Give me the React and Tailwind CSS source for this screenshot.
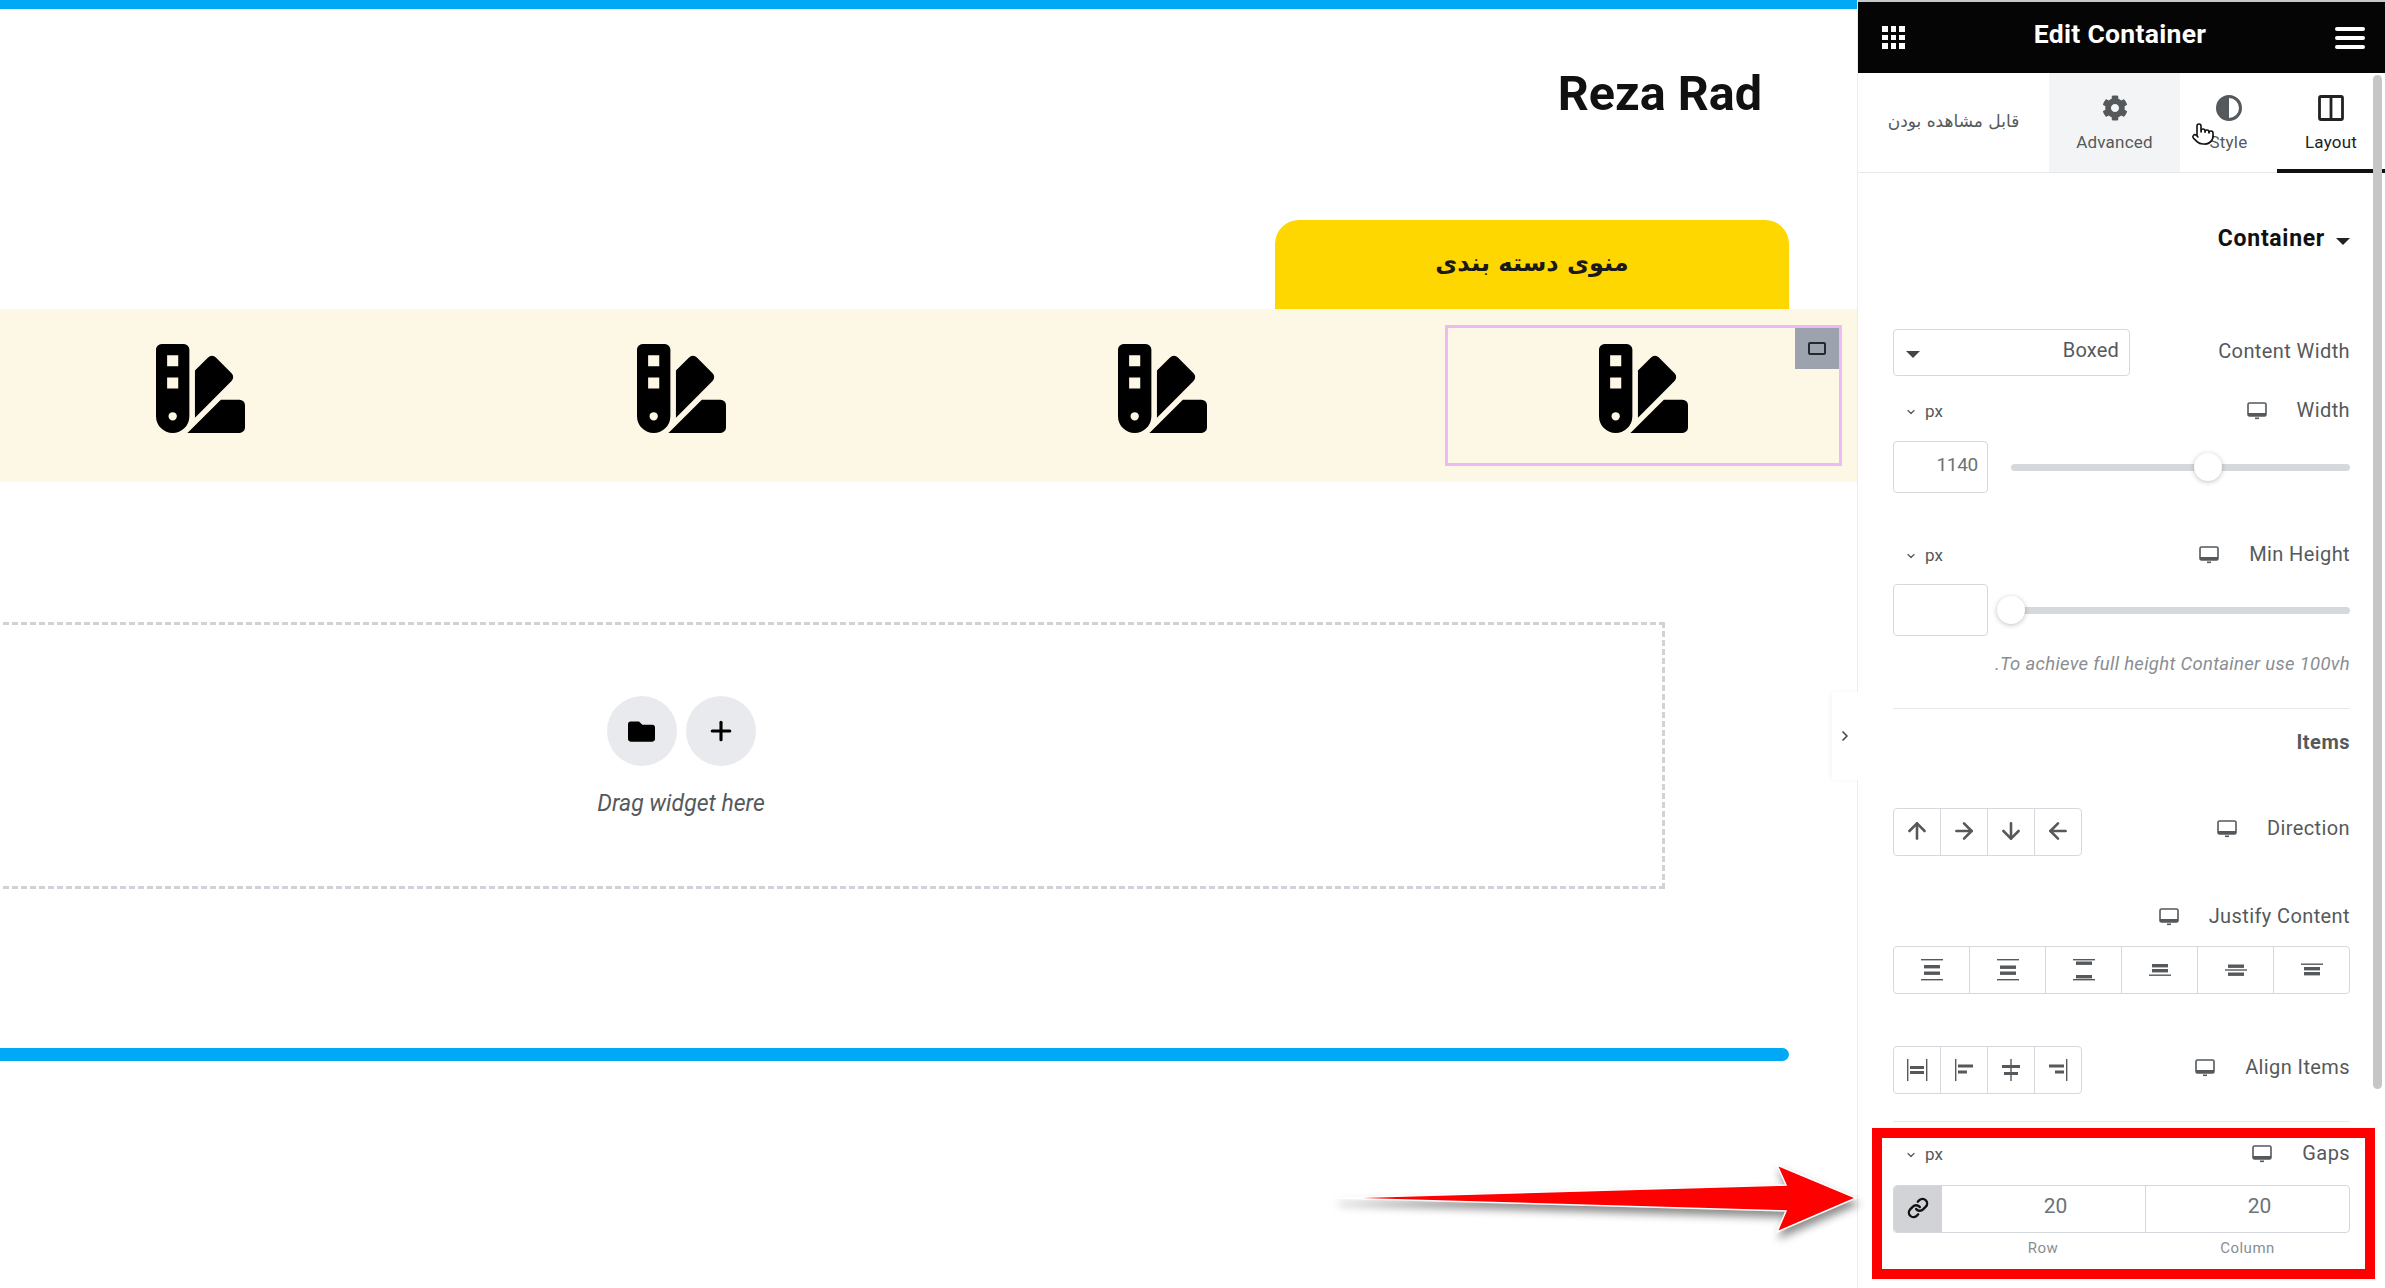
import React from 'react';
import { ArrowUp, ArrowRight, ArrowDown, ArrowLeft, ChevronDown, ChevronRight, Link, Plus, Pointer } from 'lucide-react';
import { FaSwatchbook, FaCog, FaFolder } from 'react-icons/fa';

const PANEL = "font-['Roboto',sans-serif]";

// small monitor glyph next to responsive controls
function Monitor({ className = '' }) {
  return (
    <svg viewBox="0 0 20 20" className={`w-[20px] h-[20px] text-[#55595c] ${className}`} fill="none">
      <rect x="1" y="2" width="18" height="13" rx="1.5" stroke="currentColor" strokeWidth="1.6" />
      <rect x="1" y="12" width="18" height="3" fill="currentColor" />
      <rect x="8" y="16.5" width="4" height="1.6" fill="currentColor" />
    </svg>
  );
}

function UnitPicker() {
  return (
    <div className="flex items-center gap-[8px] pl-[12px] pt-[3px] text-[17px] text-[#55595c]">
      <ChevronDown className="w-[12px] h-[12px]" strokeWidth={2.5} />
      <span>px</span>
    </div>
  );
}

function ControlHeader({ label, mt, gap = 'gap-[30px]', unit }) {
  return (
    <div className={`flex items-center justify-between h-[24px] ${mt}`}>
      {unit ? <UnitPicker /> : <span />}
      <div className={`flex items-center ${gap}`}>
        <Monitor className="mt-[2px]" />
        <span className="text-[20px] tracking-[0.4px] text-[#55595c]">{label}</span>
      </div>
    </div>
  );
}

function SliderRow({ value, thumbLeft, mt }) {
  return (
    <div className={`flex items-center gap-[23px] h-[52px] ${mt}`}>
      <div className="w-[95px] h-full border border-[#d5d8dc] rounded-[4px] flex items-center justify-end pr-[9px] pb-[3px] text-[19px] tracking-[-0.3px] text-[#6d7278]">
        {value}
      </div>
      <div className="relative flex-1 h-[7px] rounded-full bg-[#d5d8dc]">
        <div
          className="absolute top-1/2 -translate-y-1/2 -translate-x-1/2 w-[28px] h-[28px] rounded-full bg-white shadow-[0_1px_5px_rgba(0,0,0,0.25)]"
          style={{ left: thumbLeft }}
        />
      </div>
    </div>
  );
}

function ButtonGroup({ items, className = '' }) {
  return (
    <div className={`flex h-[48px] border border-[#d5d8dc] rounded-[4px] divide-x divide-[#d5d8dc] text-[#55595c] ${className}`}>
      {items.map((item, i) => (
        <div key={i} className="flex-1 flex items-center justify-center">
          {item}
        </div>
      ))}
    </div>
  );
}

// Bars + rule glyphs for justify content and align items, as [x, y, w, h].
function Bars({ rects }) {
  return (
    <svg viewBox="0 0 24 24" className="w-[24px] h-[24px]" fill="currentColor">
      {rects.map(([x, y, w, h], i) => (
        <rect key={i} x={x} y={y} width={w} height={h} />
      ))}
    </svg>
  );
}

const justifyIcons = [
  [[1, 1, 22, 1.4], [4, 7, 16, 3.4], [4, 13.5, 16, 3.4], [1, 21, 22, 1.4]],
  [[1, 1, 22, 1.4], [4, 7.5, 16, 3.4], [4, 13.5, 16, 3.4], [1, 21, 22, 1.4]],
  [[1, 1, 22, 1.4], [4, 3.5, 16, 3.4], [4, 17, 16, 3.4], [1, 21, 22, 1.4]],
  [[4, 6, 16, 3.4], [4, 11, 16, 3.4], [1, 16.5, 22, 1.4]],
  [[4, 6.5, 16, 3.4], [1, 11.3, 22, 1.4], [4, 14.5, 16, 3.4]],
  [[1, 5.5, 22, 1.4], [4, 9, 16, 3.4], [4, 14, 16, 3.4]],
];

const alignIcons = [
  [[2, 1, 1.4, 22], [21, 1, 1.4, 22], [5, 8, 14, 3], [5, 13, 14, 3]],
  [[3, 1, 1.4, 22], [6, 6.5, 15, 3], [6, 12.5, 9, 3]],
  [[11.3, 1, 1.4, 22], [3, 7, 18, 3], [5, 14, 14, 3]],
  [[20, 1, 1.4, 22], [3, 6.5, 15, 3], [9, 12.5, 9, 3]],
];

function Canvas() {
  return (
    <main className="flex-1 min-w-0 overflow-hidden font-['Roboto',sans-serif]">
      <div className="h-[9px] bg-[#00a8f5]" />
      <h1 className="mt-[57px] h-[56px] pr-[95px] text-right text-[48.5px] leading-[56px] font-bold text-[#111]">Reza Rad</h1>

      <div className="mt-[98px] flex justify-end pr-[68px]">
        <div className="w-[514px] h-[89px] rounded-t-[24px] bg-[#ffd700] flex items-center justify-center pb-[4px] font-['DejaVu_Sans',sans-serif] text-[24px] font-bold text-[#1a1a1a]" dir="rtl">
          منوی دسته بندی
        </div>
      </div>

      <div className="h-[173px] bg-[#fdf7e6] pt-[16px] pl-[2px] flex gap-[84px]">
        {[0, 1, 2, 3].map(i => (
          <div
            key={i}
            className={`relative w-[397px] h-[141px] flex items-center justify-center pb-[14px] ${i === 3 ? 'border-[3px] border-[#f0b8f5]' : ''}`}
          >
            <FaSwatchbook className="w-[89px] h-[89px] text-black" />
            {i === 3 && (
              <div className="absolute top-0 right-0 w-[44px] h-[41px] bg-[#9ca3af] flex items-center justify-center">
                <div className="w-[18px] h-[13px] rounded-[2px] border-2 border-[#25282c]" />
              </div>
            )}
          </div>
        ))}
      </div>

      <div className="mt-[140px] -ml-[303px] w-[1968px] h-[267px] border-[3px] border-dashed border-[#cfd2d6] flex flex-col items-center pt-[71px]">
        <div className="flex gap-[9px]">
          <div className="w-[70px] h-[70px] rounded-full bg-[#e9eaed] flex items-center justify-center">
            <FaFolder className="w-[27px] h-[27px] text-black" />
          </div>
          <div className="w-[70px] h-[70px] rounded-full bg-[#e9eaed] flex items-center justify-center">
            <Plus className="w-[30px] h-[30px] text-black" strokeWidth={2.5} />
          </div>
        </div>
        <div className="mt-[21px] text-[23px] italic text-[#55595c]">Drag widget here</div>
      </div>

      <div className="mt-[159px] w-[1789px] h-[13px] rounded-r-full bg-[#00a8f5]" />
    </main>
  );
}

function Panel() {
  return (
    <aside className={`relative shrink-0 w-[528px] h-full bg-white border-l border-[#ececec] ${PANEL}`}>
      <header className="h-[73px] bg-[#050505] border-t-2 border-[#c8c8c8] flex items-center justify-between pl-[24px] pr-[20px] text-white">
        <div className="grid grid-cols-3 gap-[3px] w-[23px]">
          {Array.from({ length: 9 }).map((_, i) => (
            <div key={i} className="w-[5.5px] h-[5.5px] bg-white" />
          ))}
        </div>
        <span className="text-[26.5px] font-bold tracking-[0.3px] -mt-[8px]">Edit Container</span>
        <div className="flex flex-col gap-[5px] w-[30px]">
          <div className="h-[4px] bg-white rounded-full" />
          <div className="h-[4px] bg-white rounded-full" />
          <div className="h-[4px] bg-white rounded-full" />
        </div>
      </header>

      <nav className="flex h-[100px] border-b border-[#e6e8ea] text-[17px] tracking-[0.2px] text-[#55595c]">
        <div className="w-[191px] flex items-center justify-center pb-[2px] font-['DejaVu_Sans',sans-serif] text-[17px] tracking-normal" dir="rtl">
          قابل مشاهده بودن
        </div>
        <div className="w-[131px] bg-[#f3f4f5] flex flex-col items-center pt-[22px] gap-[9px]">
          <FaCog className="w-[26px] h-[26px]" />
          <span>Advanced</span>
        </div>
        <div className="w-[97px] flex flex-col items-center pt-[22px] gap-[9px]">
          <svg viewBox="0 0 26 26" className="w-[26px] h-[26px]">
            <circle cx="13" cy="13" r="11.5" fill="none" stroke="currentColor" strokeWidth="3" />
            <path d="M13 1.5a11.5 11.5 0 0 0 0 23z" fill="currentColor" />
          </svg>
          <span>Style</span>
        </div>
        <div className="flex-1 relative flex flex-col items-center pt-[22px] gap-[9px] text-[#222] border-b-[4px] border-[#111] h-[100px]">
          <svg viewBox="0 0 26 26" className="w-[26px] h-[26px]" fill="none" stroke="currentColor" strokeWidth="2.8">
            <rect x="1.5" y="1.5" width="23" height="23" rx="1.5" />
            <path d="M13 1.5v23" />
          </svg>
          <span>Layout</span>
        </div>
      </nav>

      <div className="px-[35px]">
        <div className="mt-[52px] h-[28px] flex items-center justify-end gap-[11px] text-[23px] font-bold tracking-[0.7px] text-[#111]">
          Container
          <span className="mt-[5px] w-0 h-0 border-x-[7px] border-x-transparent border-t-[7px] border-t-[#222]" />
        </div>

        <div className="mt-[76px] h-[47px] flex items-center justify-between">
          <div className="w-[237px] h-full border border-[#d5d8dc] rounded-[4px] flex items-center justify-between pl-[12px] pr-[10px] text-[20px] tracking-[0.2px] text-[#55595c]">
            <span className="mt-[4px] w-0 h-0 border-x-[7px] border-x-transparent border-t-[7px] border-t-[#444]" />
            <span className="-mt-[6px]">Boxed</span>
          </div>
          <span className="-mt-[4px] text-[20px] tracking-[0.4px] text-[#55595c]">Content Width</span>
        </div>

        <ControlHeader label="Width" unit mt="mt-[22px]" />
        <SliderRow value="1140" thumbLeft="58.2%" mt="mt-[19px]" />

        <ControlHeader label="Min Height" unit mt="mt-[49px]" />
        <SliderRow value="" thumbLeft="0%" mt="mt-[18px]" />

        <div className="mt-[17px] h-[24px] flex items-center justify-end text-[18.5px] italic tracking-[0.3px] text-[#8a8e93]">
          .To achieve full height Container use 100vh
        </div>

        <div className="mt-[31px] h-px bg-[#e6e8ea]" />
        <div className="mt-[21px] h-[24px] flex items-center justify-end text-[20px] font-bold tracking-[0.5px] text-[#55595c]">Items</div>

        <div className="mt-[54px] h-[48px] flex items-start justify-between">
          <ButtonGroup
            className="w-[189px]"
            items={[
              <ArrowUp key="u" className="w-[26px] h-[26px] -mt-[3px]" strokeWidth={2.4} />,
              <ArrowRight key="r" className="w-[26px] h-[26px] -mt-[3px]" strokeWidth={2.4} />,
              <ArrowDown key="d" className="w-[26px] h-[26px] -mt-[3px]" strokeWidth={2.4} />,
              <ArrowLeft key="l" className="w-[26px] h-[26px] -mt-[3px]" strokeWidth={2.4} />,
            ]}
          />
          <div className="flex items-center gap-[30px] h-[24px] mt-[8px]">
            <Monitor className="mt-[2px]" />
            <span className="text-[20px] tracking-[0.4px] text-[#55595c]">Direction</span>
          </div>
        </div>

        <ControlHeader label="Justify Content" mt="mt-[48px]" />
        <ButtonGroup className="mt-[18px]" items={justifyIcons.map((r, i) => <Bars key={i} rects={r} />)} />

        <div className="mt-[52px] h-[48px] flex items-start justify-between">
          <ButtonGroup className="w-[189px]" items={alignIcons.map((r, i) => <Bars key={i} rects={r} />)} />
          <div className="flex items-center gap-[30px] h-[24px] mt-[9px]">
            <Monitor className="mt-[2px]" />
            <span className="text-[20px] tracking-[0.4px] text-[#55595c]">Align Items</span>
          </div>
        </div>

        <div className="mt-[27px] h-px bg-[#e6e8ea]" />
        <ControlHeader label="Gaps" unit mt="mt-[19px]" />

        <div className="mt-[20px] h-[48px] flex border border-[#d5d8dc] rounded-[4px] text-[21px] text-[#6d7278]">
          <div className="w-[48px] bg-[#d1d3d6] rounded-l-[4px] flex items-center justify-center">
            <Link className="w-[22px] h-[22px] text-[#111] -mt-[3px]" strokeWidth={2.6} />
          </div>
          <div className="w-[204px] border-r border-[#d5d8dc] flex items-center justify-center pb-[4px] pl-[24px]">20</div>
          <div className="flex-1 flex items-center justify-center pb-[4px] pl-[24px]">20</div>
        </div>
        <div className="mt-[4px] flex text-[15px] tracking-[0.5px] text-[#8a8e93]">
          <span className="w-[252px] pl-[48px] text-center">Row</span>
          <span className="flex-1 text-center">Column</span>
        </div>
      </div>

      {/* overlays: scrollbar thumb, collapse tab, annotation box, cursor */}
      <div className="absolute top-[75px] left-[515px] w-[9px] h-[1014px] rounded-full bg-[#c6c6c6]" />
      <div className="absolute top-[692px] -left-[26px] w-[26px] h-[88px] bg-white rounded-l-[4px] shadow-[-2px_0_4px_rgba(0,0,0,0.04)] flex items-center justify-center">
        <ChevronRight className="w-[16px] h-[16px] text-[#444]" strokeWidth={2.5} />
      </div>
      <div className="absolute top-[1128px] left-[14px] w-[503px] h-[151px] border-[10px] border-[#ff0000]" />
      <Pointer className="absolute top-[122px] left-[333px] w-[24px] h-[24px] text-[#111] fill-white" strokeWidth={1.6} />
    </aside>
  );
}

export default function App() {
  return (
    <div className="relative flex w-[2385px] h-[1288px] overflow-hidden bg-white">
      <Canvas />
      <Panel />
      <svg viewBox="0 0 540 90" className="absolute top-[1155px] left-[1330px] w-[540px] h-[90px] drop-shadow-[2px_6px_4px_rgba(0,0,0,0.45)]">
        <polygon points="6,43 456,30 447,10 526,43 447,77 456,56" fill="#ff0000" stroke="#ffffff" strokeWidth="1.5" />
      </svg>
    </div>
  );
}
